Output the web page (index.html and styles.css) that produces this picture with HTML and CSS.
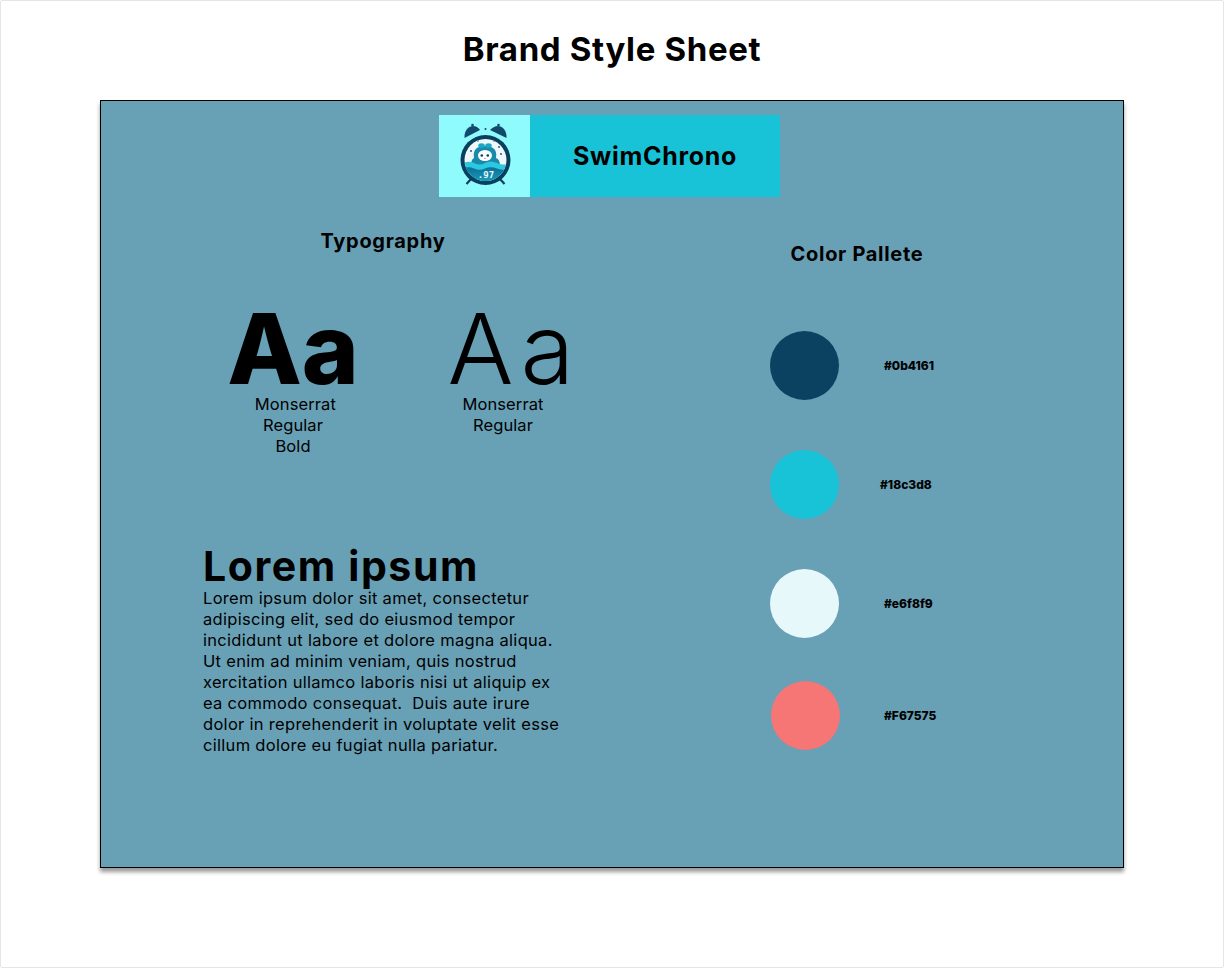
FILE: index.html
```html
<!DOCTYPE html>
<html lang="en">
<head>
  <meta charset="UTF-8">
  <meta name="viewport" content="width=device-width, initial-scale=1.0">
  <title>Brand Style Sheet</title>
  <link rel="stylesheet" href="styles.css">
</head>
<body>

<div class="page">
  <h1 class="page-title">Brand Style Sheet</h1>

  <div class="slide">
    <div class="brand">
      <div class="brand-logo">
        <svg width="56" height="68" viewBox="0 0 56 68">
          <defs>
            <clipPath id="face"><circle cx="28.500" cy="38" r="21"/></clipPath>
            <linearGradient id="water" x1="0" y1="0" x2="0" y2="1">
              <stop offset="0" stop-color="#0c6f95"/>
              <stop offset="1" stop-color="#19a6c2"/>
            </linearGradient>
          </defs>
          <!-- bells -->
          <path d="M7.500 16 C7 9 11 4 16 4 C19 4 22 6 23 8 Z" fill="#124a6c"/>
          <path d="M49.500 16 C50 9 46 4 41 4 C38 4 35 6 33 8 Z" fill="#124a6c"/>
          <circle cx="15.500" cy="3" r="1.300" fill="#124a6c"/>
          <circle cx="41.500" cy="3" r="1.300" fill="#124a6c"/>
          <circle cx="28.500" cy="7" r="1" fill="#124a6c"/>
          <path d="M14 57 L9.500 62 M43 57 L47.500 62" stroke="#123f5c" stroke-width="2.200"/>
          <!-- clock body -->
          <circle cx="28.500" cy="38" r="25" fill="#0b3f5e"/>
          <g clip-path="url(#face)">
            <rect x="5" y="15" width="47" height="47" fill="#eef8fa"/>
            <circle cx="14" cy="29" r="0.900" fill="#124a6c"/>
            <circle cx="42" cy="25" r="0.900" fill="#124a6c"/>
            <circle cx="44" cy="32" r="0.900" fill="#124a6c"/>
            <circle cx="21" cy="19" r="0.700" fill="#124a6c"/>
            <circle cx="37" cy="19" r="0.700" fill="#124a6c"/>
            <!-- character -->
            <path d="M14 44 Q14 37 17 36 Q15 24 28 24 Q41 24 39 36 Q43 37 43 44 Z" fill="#1a8aab"/>
            <ellipse cx="24.500" cy="23.500" rx="3.200" ry="2.300" fill="#1aa5c4"/>
            <ellipse cx="31.500" cy="23.500" rx="3.200" ry="2.300" fill="#1aa5c4"/>
            <ellipse cx="28" cy="33.500" rx="7" ry="5.500" fill="#fbfeff"/>
            <circle cx="24.800" cy="33.500" r="1.300" fill="#0b3f5e"/>
            <circle cx="30.800" cy="33.500" r="1.300" fill="#0b3f5e"/>
            <path d="M27 36.500 H29" stroke="#d98a8a" stroke-width="0.800"/>
            <!-- waves -->
            <path d="M5 42 Q11 38 17 41 T28 41 T40 41 T52 41 V62 H5 Z" fill="#2cc8e2"/>
            <path d="M5 47 Q11 44 17 46.500 T28 46.500 T40 46.500 T52 46.500 V62 H5 Z" fill="url(#water)"/>
          </g>
          <text x="29" y="56" class="logo-num">.97</text>
        </svg>
      </div>
      <div class="brand-name">SwimChrono</div>
    </div>

    <div class="columns">
      <div class="typo">
        <h2 class="section-title">Typography</h2>
        <div class="samples">
          <div class="sample">
            <div class="sample-bold">Aa</div>
            <div class="sample-label">&nbsp;Monserrat<br>Regular<br>Bold</div>
          </div>
          <div class="sample">
            <div class="sample-light">Aa</div>
            <div class="sample-label">Monserrat<br>Regular</div>
          </div>
        </div>
        <div class="lorem">
          <h3 class="lorem-title">Lorem ipsum</h3>
          <p class="lorem-text">Lorem ipsum dolor sit amet, consectetur<br>adipiscing elit, sed do eiusmod tempor<br>incididunt ut labore et dolore magna aliqua.<br>Ut enim ad minim veniam, quis nostrud<br>xercitation ullamco laboris nisi ut aliquip ex<br>ea commodo consequat.&nbsp; Duis aute irure<br>dolor in reprehenderit in voluptate velit esse<br>cillum dolore eu fugiat nulla pariatur.</p>
        </div>
      </div>

      <div class="palette">
        <h2 class="section-title">Color Pallete</h2>
        <div class="swatch swatch-1">
          <span class="dot dot-navy"></span>
          <span class="hex">#0b4161</span>
        </div>
        <div class="swatch swatch-2">
          <span class="dot dot-cyan"></span>
          <span class="hex">#18c3d8</span>
        </div>
        <div class="swatch swatch-3">
          <span class="dot dot-ice"></span>
          <span class="hex">#e6f8f9</span>
        </div>
        <div class="swatch swatch-4">
          <span class="dot dot-coral"></span>
          <span class="hex">#F67575</span>
        </div>
      </div>
    </div>
  </div>
</div>

</body>
</html>
```

FILE: styles.css
```css
* {
  box-sizing: border-box;
  font-family: Inter, "Liberation Sans", sans-serif;
}
body {
  margin: 0;
  background: #fff;
  color: #000;
}
.page {
  width: 1224px;
  height: 968px;
  border: 1px solid #e6e6e6;
  border-radius: 2px;
  padding-top: 28px;
  overflow: hidden;
}
.page-title {
  margin: 0;
  height: 71px;
  text-align: center;
  font-size: 33px;
  line-height: 40px;
  font-weight: 700;
  letter-spacing: 0.65px;
}

.slide {
  width: 1024px;
  height: 768px;
  margin-left: 99px;
  background: #68a0b6;
  border: 1px solid #000;
  box-shadow: 0 4px 4px rgba(0,0,0,0.4);
}

/* logo banner */
.brand {
  display: flex;
  width: 341px;
  height: 82px;
  margin: 14px 0 0 338px;
}
.brand-logo {
  width: 91px;
  background: #90fbfc;
  display: flex;
  align-items: center;
  justify-content: center;
}
.brand-name {
  flex: 1;
  background: #18c3d8;
  display: flex;
  align-items: center;
  justify-content: center;
  font-size: 25px;
  font-weight: 700;
  letter-spacing: 0.7px;
}
.logo-num {
  font-size: 9px;
  font-weight: 700;
  fill: #e6f8f9;
  text-anchor: middle;
  font-family: "DejaVu Sans Mono", monospace;
}

.columns {
  display: flex;
}
.section-title {
  margin: 0;
  text-align: center;
  font-size: 20px;
  line-height: 26px;
  font-weight: 700;
  letter-spacing: 0.7px;
}

/* typography */
.typo {
  width: 564px;
  padding-top: 31px;
}
.samples {
  display: flex;
  gap: 50px;
  margin: 49px 0 0 112px;
  height: 242px;
}
.sample {
  width: 160px;
  text-align: center;
}
.sample-bold,
.sample-light {
  line-height: 91px;
}
.sample-bold {
  font-size: 97px;
  font-weight: 800;
}
.sample-light {
  font-size: 98px;
  font-weight: 300;
  letter-spacing: 7px;
  padding-left: 23px;
}
.sample-label {
  font-size: 16.5px;
  line-height: 21px;
  letter-spacing: 0.1px;
}
.lorem {
  margin-left: 102px;
}
.lorem-title {
  margin: 0;
  font-size: 41px;
  line-height: 43px;
  font-weight: 700;
  letter-spacing: 1.6px;
}
.lorem-text {
  margin: 0;
  font-size: 16.5px;
  line-height: 21px;
  letter-spacing: 0.3px;
}

/* palette */
.palette {
  width: 384px;
  padding-top: 44px;
}
.swatch {
  display: flex;
  align-items: center;
  height: 69px;
  padding-left: 105px;
  font-size: 12px;
}
.swatch-1 { margin-top: 64px; }
.swatch-2 { margin-top: 50px; }
.swatch-3 { margin-top: 50px; }
.swatch-4 { margin-top: 43px; padding-left: 106px; }
.dot {
  width: 69px;
  height: 69px;
  border-radius: 50%;
  margin-right: 45px;
}
.swatch-2 .dot { margin-right: 41px; }
.swatch-4 .dot { margin-right: 44px; }
.dot-navy { background: #0b4161; }
.dot-cyan { background: #18c3d8; }
.dot-ice { background: #e6f8f9; }
.dot-coral { background: #f67575; }
.hex {
  font-weight: 800;
}
```
